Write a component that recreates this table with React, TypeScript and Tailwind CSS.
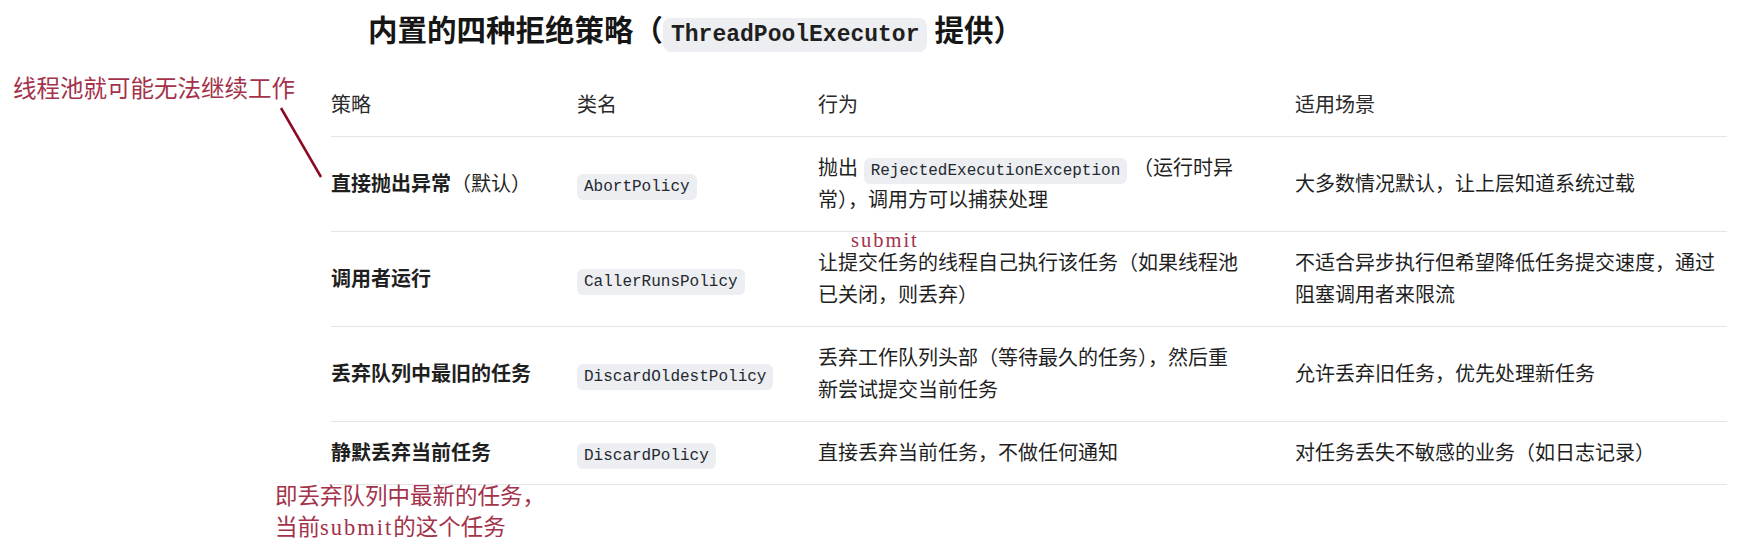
import React from "react";

const body = { fontFamily: 'Inter, "Noto Sans CJK SC", sans-serif' };
const mono = { fontFamily: '"Liberation Mono", "DejaVu Sans Mono", monospace' };

function Code({ children }: { children: React.ReactNode }) {
  return (
    <code
      style={mono}
      className="rounded-md bg-[#eceef1] px-[7px] py-[4px] text-[16px] leading-none text-[#24292f]"
    >
      {children}
    </code>
  );
}

function Submit() {
  return (
    <span style={{ fontFamily: '"Liberation Serif", serif' }} className="tracking-[2px]">
      submit
    </span>
  );
}

const rows: { name: React.ReactNode; cls: string; act: React.ReactNode; use: React.ReactNode }[] = [
  {
    name: (
      <>
        <b className="font-bold">直接抛出异常</b>（默认）
      </>
    ),
    cls: "AbortPolicy",
    act: (
      <>
        抛出 <Code>RejectedExecutionException</Code> （运行时异
        <br />
        常），调用方可以捕获处理
      </>
    ),
    use: "大多数情况默认，让上层知道系统过载",
  },
  {
    name: <b className="font-bold">调用者运行</b>,
    cls: "CallerRunsPolicy",
    act: (
      <>
        让提交任务的线程自己执行该任务（如果线程池
        <br />
        已关闭，则丢弃）
      </>
    ),
    use: (
      <>
        不适合异步执行但希望降低任务提交速度，通过
        <br />
        阻塞调用者来限流
      </>
    ),
  },
  {
    name: <b className="font-bold">丢弃队列中最旧的任务</b>,
    cls: "DiscardOldestPolicy",
    act: (
      <>
        丢弃工作队列头部（等待最久的任务），然后重
        <br />
        新尝试提交当前任务
      </>
    ),
    use: "允许丢弃旧任务，优先处理新任务",
  },
  {
    name: <b className="font-bold">静默丢弃当前任务</b>,
    cls: "DiscardPolicy",
    act: "直接丢弃当前任务，不做任何通知",
    use: "对任务丢失不敏感的业务（如日志记录）",
  },
];

const grid =
  "grid grid-cols-[246px_241px_477px_432px] items-center whitespace-nowrap border-b border-[#e5e5e5] py-[15px]";

export default function App() {
  return (
    <div style={body} className="relative h-[547px] w-[1740px] overflow-hidden bg-white text-[20px] leading-[32px] text-[#1f1f1f]">
      <div className="pl-[331px]">
        <h2 className="mt-[10px] pl-[37px] text-[29.5px] leading-[40px] font-bold text-[#161616]">
          内置的四种拒绝策略（
          <code style={mono} className="rounded-lg bg-[#eceef1] px-[8px] py-[4px] text-[23px] leading-none font-bold text-[#1f1f1f]">
            ThreadPoolExecutor
          </code>{" "}
          提供）
        </h2>

        <div className="mt-[24px] w-[1396px]">
          <div className={grid + " text-[#2a2a2a]"}>
            <div>策略</div>
            <div>类名</div>
            <div>行为</div>
            <div>适用场景</div>
          </div>
          {rows.map((r) => (
            <div key={r.cls} className={grid}>
              <div>{r.name}</div>
              <div>
                <Code>{r.cls}</Code>
              </div>
              <div>{r.act}</div>
              <div>{r.use}</div>
            </div>
          ))}
        </div>
      </div>

      {/* hand-written notes over the screenshot */}
      <div className="absolute left-[13px] top-[73px] text-[23.5px] leading-[32px] text-[#a3324a]">
        线程池就可能无法继续工作
      </div>
      <svg className="absolute left-0 top-0" width="400" height="200">
        <line x1="281" y1="108" x2="321" y2="177" stroke="#8b0a22" strokeWidth="2.5" />
      </svg>
      <div className="absolute left-[851px] top-[226px] text-[20.5px] leading-[28px] text-[#a3324a]">
        <Submit />
      </div>
      <div className="absolute left-[275px] top-[480px] text-[22.5px] leading-[31px] text-[#a3324a]">
        即丢弃队列中最新的任务，
        <br />
        当前<Submit />的这个任务
      </div>
    </div>
  );
}
